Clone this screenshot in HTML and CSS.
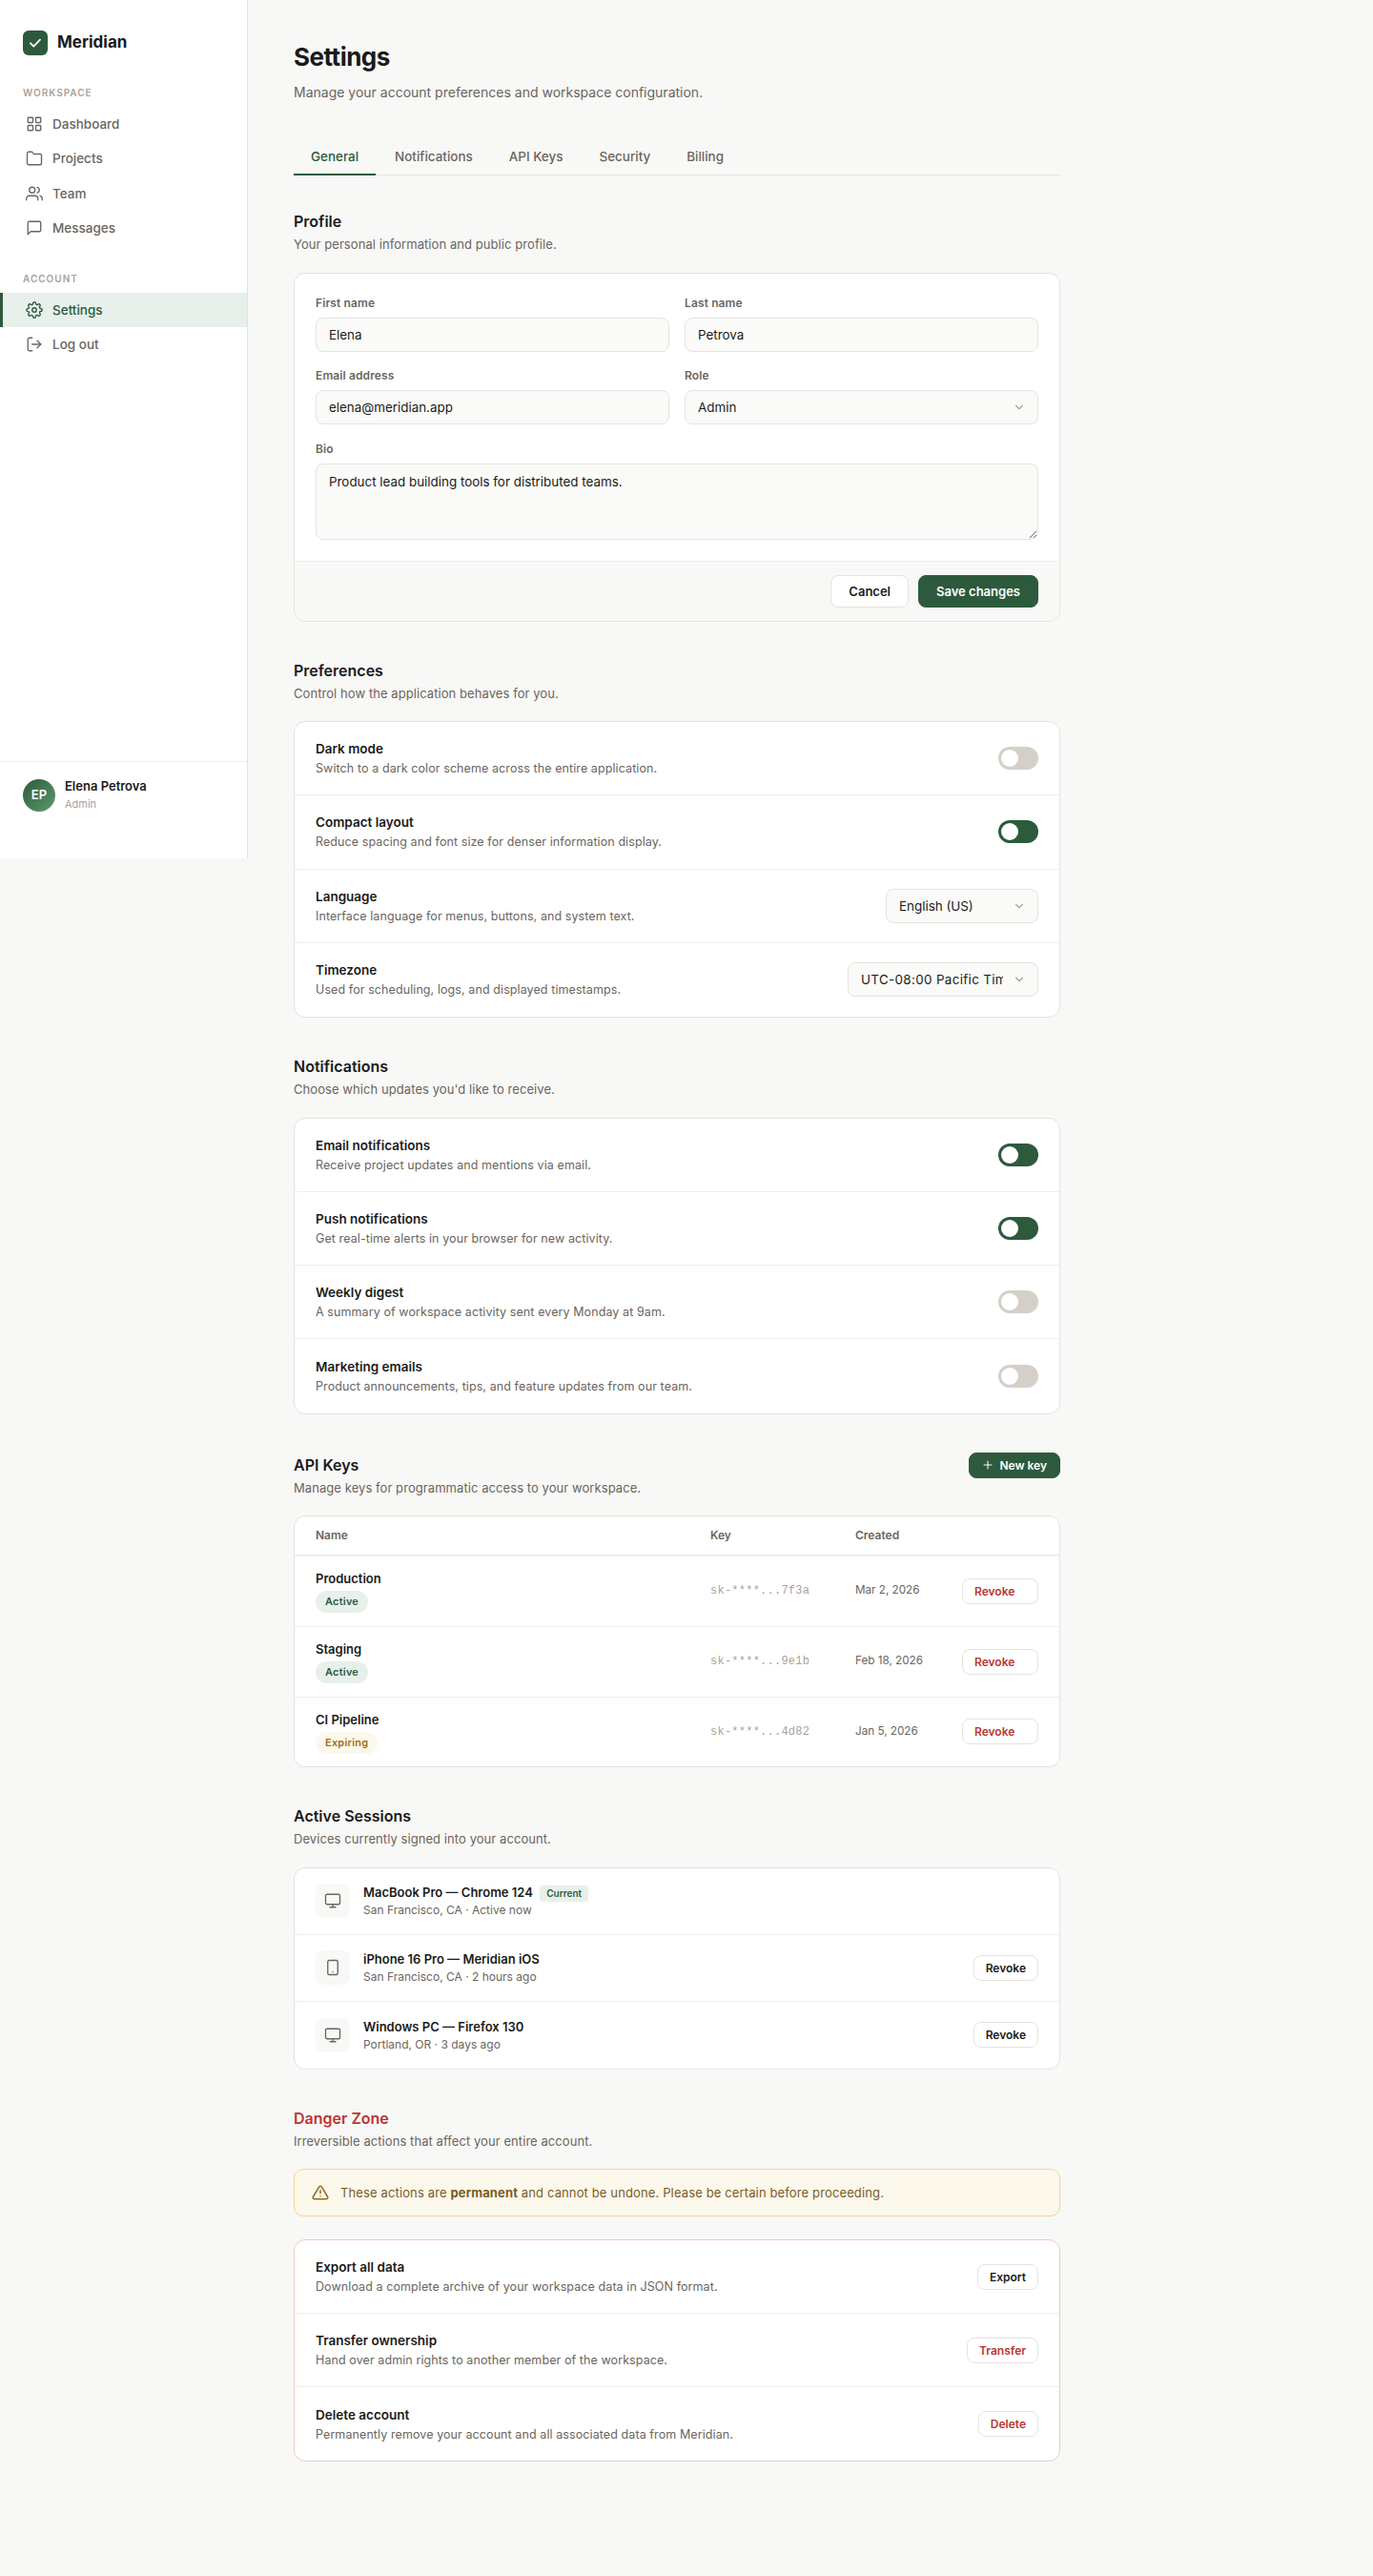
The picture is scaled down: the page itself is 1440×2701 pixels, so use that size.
FILE: index.html
```html
<!DOCTYPE html>
<html>
<head>
  <title>Settings - Meridian</title>
  <link rel="stylesheet" href="styles.css">
</head>
<body>
  <aside class="sidebar">
    <div class="brand">
      <span class="brand-mark">
        <svg width="16" height="16" viewBox="0 0 24 24" fill="none" stroke="#fff" stroke-width="2.8" stroke-linecap="round" stroke-linejoin="round"><path d="M4.5 12.5l5 5L19.5 7"/></svg>
      </span>
      <span class="brand-name">Meridian</span>
    </div>

    <div class="nav-label">WORKSPACE</div>
    <nav class="nav-group">
      <a class="nav-item">
        <svg class="icon" viewBox="0 0 24 24"><rect x="3" y="3" width="7" height="7" rx="1"/><rect x="14" y="3" width="7" height="7" rx="1"/><rect x="3" y="14" width="7" height="7" rx="1"/><rect x="14" y="14" width="7" height="7" rx="1"/></svg>
        Dashboard
      </a>
      <a class="nav-item">
        <svg class="icon" viewBox="0 0 24 24"><path d="M22 19a2 2 0 0 1-2 2H4a2 2 0 0 1-2-2V5a2 2 0 0 1 2-2h5l2 3h9a2 2 0 0 1 2 2z"/></svg>
        Projects
      </a>
      <a class="nav-item">
        <svg class="icon" viewBox="0 0 24 24"><path d="M17 21v-2a4 4 0 0 0-4-4H5a4 4 0 0 0-4 4v2"/><circle cx="9" cy="7" r="4"/><path d="M23 21v-2a4 4 0 0 0-3-3.87"/><path d="M16 3.13a4 4 0 0 1 0 7.75"/></svg>
        Team
      </a>
      <a class="nav-item">
        <svg class="icon" viewBox="0 0 24 24"><path d="M21 15a2 2 0 0 1-2 2H7l-4 4V5a2 2 0 0 1 2-2h14a2 2 0 0 1 2 2z"/></svg>
        Messages
      </a>
    </nav>

    <div class="nav-label nav-label-account">ACCOUNT</div>
    <nav class="nav-group">
      <a class="nav-item active">
        <svg class="icon" viewBox="0 0 24 24"><circle cx="12" cy="12" r="3"/><path d="M19.4 15a1.65 1.65 0 0 0 .33 1.82l.06.06a2 2 0 0 1 0 2.83 2 2 0 0 1-2.83 0l-.06-.06a1.65 1.65 0 0 0-1.82-.33 1.65 1.65 0 0 0-1 1.51V21a2 2 0 0 1-2 2 2 2 0 0 1-2-2v-.09A1.65 1.65 0 0 0 9 19.4a1.65 1.65 0 0 0-1.82.33l-.06.06a2 2 0 0 1-2.83 0 2 2 0 0 1 0-2.83l.06-.06a1.65 1.65 0 0 0 .33-1.82 1.65 1.65 0 0 0-1.51-1H3a2 2 0 0 1-2-2 2 2 0 0 1 2-2h.09A1.65 1.65 0 0 0 4.6 9a1.65 1.65 0 0 0-.33-1.82l-.06-.06a2 2 0 0 1 0-2.83 2 2 0 0 1 2.83 0l.06.06a1.65 1.65 0 0 0 1.82.33H9a1.65 1.65 0 0 0 1-1.51V3a2 2 0 0 1 2-2 2 2 0 0 1 2 2v.09a1.65 1.65 0 0 0 1 1.51 1.65 1.65 0 0 0 1.82-.33l.06-.06a2 2 0 0 1 2.83 0 2 2 0 0 1 0 2.83l-.06.06a1.65 1.65 0 0 0-.33 1.82V9a1.65 1.65 0 0 0 1.51 1H21a2 2 0 0 1 2 2 2 2 0 0 1-2 2h-.09a1.65 1.65 0 0 0-1.51 1z"/></svg>
        Settings
      </a>
      <a class="nav-item">
        <svg class="icon" viewBox="0 0 24 24"><path d="M9 21H5a2 2 0 0 1-2-2V5a2 2 0 0 1 2-2h4"/><path d="M16 17l5-5-5-5"/><path d="M21 12H9"/></svg>
        Log out
      </a>
    </nav>

    <div class="user">
      <span class="avatar">EP</span>
      <div>
        <div class="user-name">Elena Petrova</div>
        <div class="user-role">Admin</div>
      </div>
    </div>
  </aside>

  <main class="main">
    <h1>Settings</h1>
    <p class="page-sub">Manage your account preferences and workspace configuration.</p>

    <div class="tabs">
      <a class="tab active">General</a>
      <a class="tab">Notifications</a>
      <a class="tab">API Keys</a>
      <a class="tab">Security</a>
      <a class="tab">Billing</a>
    </div>

    <section class="section">
      <h2>Profile</h2>
      <p class="section-sub">Your personal information and public profile.</p>
      <div class="card">
        <div class="form-body">
          <div class="form-grid">
            <div class="field">
              <label for="first">First name</label>
              <input id="first" type="text" value="Elena">
            </div>
            <div class="field">
              <label for="last">Last name</label>
              <input id="last" type="text" value="Petrova">
            </div>
            <div class="field">
              <label for="email">Email address</label>
              <input id="email" type="email" value="elena@meridian.app">
            </div>
            <div class="field">
              <label for="role">Role</label>
              <select id="role"><option>Admin</option><option>Member</option></select>
            </div>
            <div class="field field-wide">
              <label for="bio">Bio</label>
              <textarea id="bio">Product lead building tools for distributed teams.</textarea>
            </div>
          </div>
        </div>
        <div class="form-footer">
          <button class="btn btn-cancel">Cancel</button>
          <button class="btn btn-primary">Save changes</button>
        </div>
      </div>
    </section>

    <section class="section">
      <h2>Preferences</h2>
      <p class="section-sub">Control how the application behaves for you.</p>
      <div class="card">
        <div class="row">
          <div>
            <div class="row-title">Dark mode</div>
            <div class="row-desc">Switch to a dark color scheme across the entire application.</div>
          </div>
          <span class="toggle"></span>
        </div>
        <div class="row">
          <div>
            <div class="row-title">Compact layout</div>
            <div class="row-desc">Reduce spacing and font size for denser information display.</div>
          </div>
          <span class="toggle on"></span>
        </div>
        <div class="row">
          <div>
            <div class="row-title">Language</div>
            <div class="row-desc">Interface language for menus, buttons, and system text.</div>
          </div>
          <select class="select-language"><option>English (US)</option></select>
        </div>
        <div class="row">
          <div>
            <div class="row-title">Timezone</div>
            <div class="row-desc">Used for scheduling, logs, and displayed timestamps.</div>
          </div>
          <select class="select-timezone"><option>UTC-08:00 Pacific Time</option></select>
        </div>
      </div>
    </section>

    <section class="section">
      <h2>Notifications</h2>
      <p class="section-sub">Choose which updates you'd like to receive.</p>
      <div class="card">
        <div class="row">
          <div>
            <div class="row-title">Email notifications</div>
            <div class="row-desc">Receive project updates and mentions via email.</div>
          </div>
          <span class="toggle on"></span>
        </div>
        <div class="row">
          <div>
            <div class="row-title">Push notifications</div>
            <div class="row-desc">Get real-time alerts in your browser for new activity.</div>
          </div>
          <span class="toggle on"></span>
        </div>
        <div class="row">
          <div>
            <div class="row-title">Weekly digest</div>
            <div class="row-desc">A summary of workspace activity sent every Monday at 9am.</div>
          </div>
          <span class="toggle"></span>
        </div>
        <div class="row">
          <div>
            <div class="row-title">Marketing emails</div>
            <div class="row-desc">Product announcements, tips, and feature updates from our team.</div>
          </div>
          <span class="toggle"></span>
        </div>
      </div>
    </section>

    <section class="section">
      <div class="section-head">
        <div class="section-head-text">
          <h2>API Keys</h2>
          <p class="section-sub">Manage keys for programmatic access to your workspace.</p>
        </div>
        <button class="btn btn-primary btn-new">
          <svg width="12" height="12" viewBox="0 0 24 24" fill="none" stroke="#fff" stroke-width="2" stroke-linecap="round"><path d="M12 4v16M4 12h16"/></svg>
          New key
        </button>
      </div>
      <div class="card">
        <table class="keys">
          <colgroup>
            <col class="col-name"><col class="col-key"><col class="col-date"><col class="col-action">
          </colgroup>
          <thead>
            <tr><th>Name</th><th>Key</th><th>Created</th><th></th></tr>
          </thead>
          <tbody>
            <tr>
              <td><div class="key-name">Production</div><span class="badge badge-active">Active</span></td>
              <td class="key">sk-****...7f3a</td>
              <td class="date">Mar 2, 2026</td>
              <td><button class="btn btn-small btn-danger btn-revoke">Revoke</button></td>
            </tr>
            <tr>
              <td><div class="key-name">Staging</div><span class="badge badge-active">Active</span></td>
              <td class="key">sk-****...9e1b</td>
              <td class="date">Feb 18, 2026</td>
              <td><button class="btn btn-small btn-danger btn-revoke">Revoke</button></td>
            </tr>
            <tr>
              <td><div class="key-name">CI Pipeline</div><span class="badge badge-expiring">Expiring</span></td>
              <td class="key">sk-****...4d82</td>
              <td class="date">Jan 5, 2026</td>
              <td><button class="btn btn-small btn-danger btn-revoke">Revoke</button></td>
            </tr>
          </tbody>
        </table>
      </div>
    </section>

    <section class="section">
      <h2>Active Sessions</h2>
      <p class="section-sub">Devices currently signed into your account.</p>
      <div class="card">
        <div class="session">
          <span class="device">
            <svg class="icon" viewBox="0 0 24 24"><rect x="2" y="3" width="20" height="14" rx="2"/><path d="M8 21h8M12 17v4"/></svg>
          </span>
          <div class="session-info">
            <div class="session-name">MacBook Pro — Chrome 124 <span class="current">Current</span></div>
            <div class="session-meta">San Francisco, CA · Active now</div>
          </div>
        </div>
        <div class="session">
          <span class="device">
            <svg class="icon" viewBox="0 0 24 24"><rect x="5" y="2" width="14" height="20" rx="2"/><path d="M12 18h.01"/></svg>
          </span>
          <div class="session-info">
            <div class="session-name">iPhone 16 Pro — Meridian iOS</div>
            <div class="session-meta">San Francisco, CA · 2 hours ago</div>
          </div>
          <button class="btn btn-small">Revoke</button>
        </div>
        <div class="session">
          <span class="device">
            <svg class="icon" viewBox="0 0 24 24"><rect x="2" y="3" width="20" height="14" rx="2"/><path d="M8 21h8M12 17v4"/></svg>
          </span>
          <div class="session-info">
            <div class="session-name">Windows PC — Firefox 130</div>
            <div class="session-meta">Portland, OR · 3 days ago</div>
          </div>
          <button class="btn btn-small">Revoke</button>
        </div>
      </div>
    </section>

    <section class="section">
      <h2 class="danger-title">Danger Zone</h2>
      <p class="section-sub">Irreversible actions that affect your entire account.</p>
      <div class="alert">
        <svg class="alert-icon" width="18" height="18" viewBox="0 0 24 24"><path d="M10.29 3.86L1.82 18a2 2 0 0 0 1.71 3h16.94a2 2 0 0 0 1.71-3L13.71 3.86a2 2 0 0 0-3.42 0z"/><path d="M12 9v4"/><path d="M12 17h.01"/></svg>
        <span>These actions are <strong>permanent</strong> and cannot be undone. Please be certain before proceeding.</span>
      </div>
      <div class="card card-danger">
        <div class="row">
          <div>
            <div class="row-title">Export all data</div>
            <div class="row-desc">Download a complete archive of your workspace data in JSON format.</div>
          </div>
          <button class="btn btn-small">Export</button>
        </div>
        <div class="row">
          <div>
            <div class="row-title">Transfer ownership</div>
            <div class="row-desc">Hand over admin rights to another member of the workspace.</div>
          </div>
          <button class="btn btn-small btn-danger">Transfer</button>
        </div>
        <div class="row">
          <div>
            <div class="row-title">Delete account</div>
            <div class="row-desc">Permanently remove your account and all associated data from Meridian.</div>
          </div>
          <button class="btn btn-small btn-danger">Delete</button>
        </div>
      </div>
    </section>
  </main>
</body>
</html>
```

FILE: styles.css
```css
* {
  box-sizing: border-box;
}

body {
  margin: 0;
  display: flex;
  align-items: flex-start;
  min-height: 2701px;
  font-family: Inter, "Noto Sans", sans-serif;
  font-size: 13px;
  line-height: 1.5;
  color: #1a1a1a;
  background-color: #f8f8f6;
}

.icon {
  width: 18px;
  height: 18px;
  flex-shrink: 0;
  fill: none;
  stroke: currentColor;
  stroke-width: 1.8;
  stroke-linecap: round;
  stroke-linejoin: round;
}

/* sidebar */

.sidebar {
  width: 260px;
  height: 900px;
  flex-shrink: 0;
  display: flex;
  flex-direction: column;
  padding: 32px 0;
  background-color: #ffffff;
  border-right: 1px solid #e5e3de;
}

.brand {
  display: flex;
  align-items: center;
  gap: 10px;
  padding: 0 24px;
  margin-bottom: 31px;
}

.brand-mark {
  width: 26px;
  height: 26px;
  display: flex;
  align-items: center;
  justify-content: center;
  border-radius: 6px;
  background-color: #2d5a3d;
}

.brand-name {
  font-size: 17px;
  font-weight: 700;
}

.nav-label {
  padding: 0 24px;
  margin-bottom: 7px;
  font-size: 10px;
  line-height: 16px;
  font-weight: 600;
  letter-spacing: 1px;
  color: #a8a29e;
}

.nav-label-account {
  margin-top: 27px;
}

.nav-item {
  height: 36.25px;
  display: flex;
  align-items: center;
  gap: 10px;
  padding: 0 24px 0 27px;
  font-size: 13.5px;
  font-weight: 500;
  color: #6b6560;
}

.nav-item.active {
  padding-left: 24px;
  border-left: 3px solid #2d5a3d;
  background-color: #e8f0eb;
  color: #2d5a3d;
}

.user {
  margin-top: auto;
  display: flex;
  gap: 10px;
  height: 70px;
  padding: 18px 24px;
  border-top: 1px solid #eeeeec;
}

.avatar {
  width: 34px;
  height: 34px;
  flex-shrink: 0;
  display: flex;
  align-items: center;
  justify-content: center;
  border-radius: 50%;
  background: linear-gradient(135deg, #2d5a3d, #5a9a6e);
  color: #ffffff;
  font-size: 13px;
  font-weight: 600;
}

.user-name {
  font-size: 13px;
  line-height: 15px;
  font-weight: 600;
}

.user-role {
  margin-top: 3px;
  font-size: 11px;
  line-height: 16px;
  color: #a8a29e;
}

/* main */

.main {
  width: 900px;
  padding: 42px 48px 120px;
}

h1 {
  margin: 0;
  font-size: 26px;
  line-height: 36px;
  font-weight: 700;
  letter-spacing: -0.5px;
}

.page-sub {
  margin: 8px 0 0;
  font-size: 14px;
  line-height: 21px;
  color: #6b6560;
}

.tabs {
  display: flex;
  gap: 2px;
  height: 38px;
  margin-top: 39px;
  margin-bottom: 37px;
  border-bottom: 1px solid #e5e3de;
}

.tab {
  height: 38px;
  padding: 8px 18px;
  font-size: 13.45px;
  line-height: 20px;
  font-weight: 500;
  color: #6b6560;
  border-bottom: 2px solid transparent;
}

.tab.active {
  color: #2d5a3d;
  border-bottom-color: #2d5a3d;
}

.section {
  margin-bottom: 40px;
}

h2 {
  margin: 0;
  font-size: 16px;
  line-height: 23px;
  font-weight: 600;
}

.section-sub {
  margin: 3px 0 19px;
  font-size: 13px;
  line-height: 19.5px;
  letter-spacing: 0.07px;
  color: #6b6560;
}

.section-head {
  display: flex;
  align-items: flex-start;
  justify-content: space-between;
}

.section-head-text {
  padding-top: 2px;
}

.card {
  overflow: hidden;
  background-color: #ffffff;
  border: 1px solid #e5e3de;
  border-radius: 12px;
}

.card-danger {
  border-color: #f0c9c5;
}

/* profile form */

.form-body {
  padding: 22px;
}

.form-grid {
  display: grid;
  grid-template-columns: 1fr 1fr;
  gap: 16.5px 16px;
}

.field-wide {
  grid-column: 1 / 3;
}

.field label {
  display: block;
  margin-bottom: 6px;
  font-size: 12px;
  line-height: 18px;
  font-weight: 600;
  letter-spacing: 0.12px;
  color: #6b6560;
}

input,
select,
textarea {
  display: block;
  font-family: inherit;
  font-size: 13.4px;
  color: #1a1a1a;
  background-color: #fafaf8;
  border: 1px solid #e5e3de;
  border-radius: 8px;
  outline: none;
}

.field input,
.field select,
.field textarea {
  width: 100%;
}

input,
select {
  height: 36px;
  padding: 0 13px;
}

textarea {
  height: 80px;
  padding: 8px 13px;
  line-height: 1.5;
}

select {
  appearance: none;
  padding-right: 36px;
  background-image: url("data:image/svg+xml,%3Csvg xmlns='http://www.w3.org/2000/svg' width='14' height='14' viewBox='0 0 24 24' fill='none' stroke='%23a8a29e' stroke-width='2' stroke-linecap='round' stroke-linejoin='round'%3E%3Cpath d='M6 9l6 6 6-6'/%3E%3C/svg%3E");
  background-repeat: no-repeat;
  background-position: right 12px center;
}

.select-language {
  width: 160px;
}

.select-timezone {
  width: 200px;
  letter-spacing: 0.35px;
}

.form-footer {
  display: flex;
  justify-content: flex-end;
  gap: 10px;
  padding: 14px 22px;
  background-color: #f8f8f6;
  border-top: 1px solid #eeeeec;
}

.btn {
  height: 34px;
  padding: 0 18px;
  font-family: inherit;
  font-size: 13px;
  font-weight: 600;
  color: #1a1a1a;
  background-color: #ffffff;
  border: 1px solid #e5e3de;
  border-radius: 8px;
}

.btn-primary {
  color: #ffffff;
  background-color: #2d5a3d;
  border-color: #2d5a3d;
}

.btn-new {
  display: flex;
  align-items: center;
  gap: 6px;
  height: 27px;
  padding: 0 13px;
  font-size: 12px;
}

.btn-small {
  height: 27px;
  padding: 0 12px;
  font-size: 12px;
}

.btn-danger {
  color: #b93535;
}

.btn-revoke {
  width: 80px;
  text-align: left;
}

/* rows */

.row {
  display: flex;
  align-items: center;
  justify-content: space-between;
  height: 77.25px;
  padding: 0 22px;
  border-bottom: 1px solid #eeeeec;
}

.card-danger .row {
  height: 77px;
}

.row:last-child {
  border-bottom: none;
}

.row-title {
  font-size: 13.5px;
  line-height: 20px;
  font-weight: 600;
}

.row-desc {
  margin-top: 1px;
  font-size: 12.5px;
  line-height: 19px;
  letter-spacing: 0.09px;
  color: #6b6560;
}

.toggle {
  position: relative;
  width: 42px;
  height: 24px;
  flex-shrink: 0;
  border-radius: 12px;
  background-color: #d4d0c8;
}

.toggle::after {
  content: "";
  position: absolute;
  top: 3px;
  left: 3px;
  width: 18px;
  height: 18px;
  border-radius: 50%;
  background-color: #ffffff;
}

.toggle.on {
  background-color: #2d5a3d;
}

/* api keys */

.keys {
  width: 100%;
  table-layout: fixed;
  border-collapse: collapse;
}

.col-name {
  width: 420px;
}

.col-key {
  width: 152px;
}

.col-date {
  width: 112px;
}

.col-action {
  width: 118px;
}

.keys th {
  height: 41px;
  padding: 0 0 0 16px;
  text-align: left;
  font-size: 12px;
  font-weight: 600;
  color: #6b6560;
  border-bottom: 2px solid #eeeeec;
}

.keys td {
  height: 74px;
  padding: 0 22px 0 16px;
  border-bottom: 1px solid #eeeeec;
}

.keys tr:last-child td {
  height: 73px;
  border-bottom: none;
}

.keys th:first-child,
.keys td:first-child {
  padding-left: 22px;
}

.key-name {
  font-size: 13px;
  line-height: 20px;
  font-weight: 600;
}

.key {
  font-family: "Liberation Mono", monospace;
  font-size: 12px;
  letter-spacing: 0.24px;
  color: #a8a29e;
}

.date {
  font-size: 11.7px;
  color: #6b6560;
}

.badge {
  display: block;
  width: fit-content;
  margin-top: 3px;
  padding: 3px 10px;
  border-radius: 12px;
  font-size: 11px;
  line-height: 17px;
  font-weight: 600;
  letter-spacing: 0.22px;
}

.badge-active {
  color: #2d5a3d;
  background-color: #e8f0eb;
}

.badge-expiring {
  color: #a16f12;
  background-color: #fdf8ec;
}

/* sessions */

.session {
  display: flex;
  align-items: center;
  gap: 14px;
  height: 70.1px;
  padding: 0 22px;
  border-bottom: 1px solid #eeeeec;
}

.session:last-child {
  border-bottom: none;
}

.device {
  width: 36px;
  height: 36px;
  flex-shrink: 0;
  display: flex;
  align-items: center;
  justify-content: center;
  border-radius: 8px;
  background-color: #f8f8f6;
  color: #6b6560;
}

.session-info {
  flex: 1;
}

.session-name {
  font-size: 13px;
  line-height: 20px;
  font-weight: 600;
}

.session-meta {
  font-size: 12px;
  line-height: 18px;
  color: #6b6560;
}

.current {
  display: inline-block;
  margin-left: 4px;
  padding: 0 7px;
  border-radius: 4px;
  font-size: 10px;
  line-height: 17px;
  font-weight: 600;
  color: #2d5a3d;
  background-color: #e8f0eb;
}

/* danger zone */

.danger-title {
  color: #b93535;
}

.alert {
  display: flex;
  align-items: center;
  gap: 12px;
  height: 50px;
  padding: 0 18px;
  margin-bottom: 24px;
  letter-spacing: 0.13px;
  color: #7a5c1e;
  background-color: #fdf8ec;
  border: 1px solid #f0d88a;
  border-radius: 10px;
}

.alert strong {
  font-weight: 700;
}

.alert-icon {
  flex-shrink: 0;
  fill: none;
  stroke: #8a6d1f;
  stroke-width: 2;
  stroke-linecap: round;
  stroke-linejoin: round;
}
```
